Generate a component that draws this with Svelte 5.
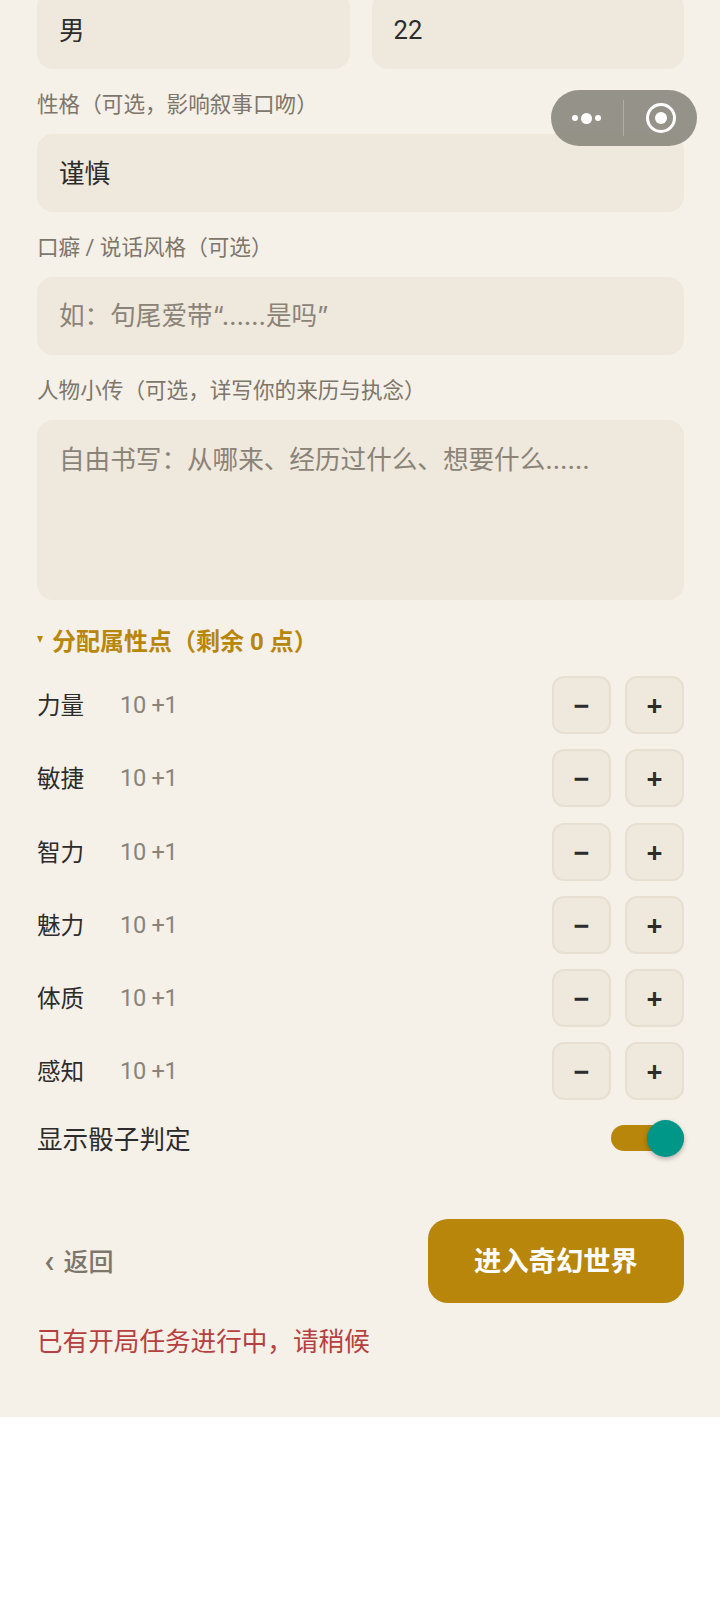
<script>
	const attrs = ['力量', '敏捷', '智力', '魅力', '体质', '感知'];
	let showDice = $state(true);
</script>

<div class="viewport">
	<div class="page">
		<div class="two-col">
			<input class="field" value="男" />
			<input class="field age" value="22" />
		</div>

		<label class="label" for="trait">性格（可选，影响叙事口吻）</label>
		<input id="trait" class="field" value="谨慎" />

		<label class="label" for="speech">口癖 / 说话风格（可选）</label>
		<input id="speech" class="field hint" placeholder="如：句尾爱带“……是吗”" />

		<label class="label" for="bio">人物小传（可选，详写你的来历与执念）</label>
		<textarea id="bio" class="field area" placeholder="自由书写：从哪来、经历过什么、想要什么……"></textarea>

		<div class="section-title"><span class="caret"></span>分配属性点（剩余 0 点）</div>

		<div class="attrs">
			{#each attrs as name}
				<div class="attr">
					<span class="attr-name">{name}</span>
					<span class="attr-value">10 +1</span>
					<div class="steppers">
						<button class="step">−</button>
						<button class="step">+</button>
					</div>
				</div>
			{/each}
		</div>

		<div class="dice-row">
			<span>显示骰子判定</span>
			<button class="switch" aria-label="显示骰子判定" onclick={() => (showDice = !showDice)}>
				<span class="track"></span>
				<span class="knob" class:off={!showDice}></span>
			</button>
		</div>

		<div class="actions">
			<button class="back"><span class="chev">‹</span>返回</button>
			<button class="enter">进入奇幻世界</button>
		</div>

		<p class="error">已有开局任务进行中，请稍候</p>
	</div>

	<!-- wechat capsule -->
	<div class="capsule">
		<div class="dots"><i></i><i class="big"></i><i></i></div>
		<span class="sep"></span>
		<div class="target"><i></i></div>
	</div>
</div>

<style>
	:global(body) {
		background: #fff;
	}

	.viewport {
		position: relative;
		width: 720px;
		height: 1600px;
		overflow: hidden;
		font-family: Roboto, 'Noto Sans CJK SC', sans-serif;
		color: #2c2c2c;
	}

	.page {
		height: 1417px;
		box-sizing: border-box;
		padding: 0 36px 0 37px;
		background: #f5f0e8;
		display: flex;
		flex-direction: column;
	}

	.two-col {
		display: flex;
		gap: 22px;
		margin-top: -9.5px;
	}

	.two-col .field {
		flex: 1;
		min-width: 0;
	}

	.field {
		display: block;
		width: 100%;
		height: 78px;
		box-sizing: border-box;
		padding: 0 22px 3px;
		border: none;
		border-radius: 16px;
		outline: none;
		background: #efe8dc;
		color: #2c2c2c;
		font-family: inherit;
		font-size: 25.6px;
	}

	.field.age {
		padding-bottom: 0;
	}

	.field.hint {
		padding-bottom: 0;
	}

	.field::placeholder {
		color: #8a8378;
		opacity: 1;
		font-family: Inter, 'Noto Sans CJK SC', sans-serif;
	}

	.area {
		height: 180px;
		padding: 21px 22px;
		line-height: 38px;
		resize: none;
	}

	.label {
		height: 65px;
		box-sizing: border-box;
		padding-top: 20px;
		font-size: 21.6px;
		line-height: 32px;
		color: #7d766b;
	}

	.two-col + .label {
		height: 65.5px;
	}

	.section-title {
		display: flex;
		align-items: center;
		margin-top: 25px;
		height: 32px;
		padding-bottom: 3px;
		box-sizing: border-box;
		font-size: 24px;
		font-weight: 700;
		color: #b8860b;
	}

	.caret {
		width: 0;
		height: 0;
		margin-right: 9px;
		border-left: 3.5px solid transparent;
		border-right: 3.5px solid transparent;
		border-top: 7px solid #b8860b;
	}

	.attrs {
		display: flex;
		flex-direction: column;
		gap: 15.3px;
		margin-top: 19px;
	}

	.attr {
		display: flex;
		align-items: center;
		height: 58px;
		font-size: 23.6px;
	}

	.attr-name {
		width: 83px;
		padding-bottom: 2px;
	}

	.attr-value {
		letter-spacing: -0.3px;
		color: #8a8378;
	}

	.steppers {
		display: flex;
		gap: 14px;
		margin-left: auto;
	}

	.step {
		width: 59px;
		height: 58px;
		padding: 0;
		border: 2px solid #e6dfd2;
		border-radius: 12px;
		background: #efe8dc;
		color: #2c2c2c;
		font-family: 'Noto Sans', sans-serif;
		font-size: 28px;
		font-weight: 700;
		line-height: 1;
	}

	.dice-row {
		display: flex;
		align-items: center;
		justify-content: space-between;
		margin-top: 8.5px;
		height: 58px;
		font-size: 25.6px;
	}

	.switch {
		position: relative;
		width: 74px;
		height: 38px;
		padding: 0;
		border: none;
		background: none;
	}

	.track {
		position: absolute;
		left: 1px;
		right: 0;
		top: 6px;
		height: 26px;
		border-radius: 13px;
		background: #b8860b;
	}

	.knob {
		position: absolute;
		right: 0;
		top: 1px;
		width: 37px;
		height: 37px;
		border-radius: 50%;
		background: #009688;
		box-shadow: 0 2px 5px rgba(0, 0, 0, 0.28);
	}

	.knob.off {
		right: auto;
		left: 0;
	}

	.actions {
		display: flex;
		align-items: center;
		justify-content: space-between;
		margin-top: 52px;
	}

	.back {
		display: flex;
		align-items: center;
		padding: 0 0 2px 7px;
		border: none;
		background: none;
		color: #7d766b;
		font-family: inherit;
		font-size: 25px;
		font-weight: 500;
	}

	.chev {
		margin-right: 9px;
		font-size: 34px;
		line-height: 1;
	}

	.enter {
		width: 256px;
		height: 84px;
		padding: 0 0 3px;
		border: none;
		border-radius: 20px;
		background: #b8860b;
		color: #fff;
		font-family: inherit;
		font-size: 27.3px;
		font-weight: 700;
	}

	.error {
		margin: 20px 0 0;
		font-size: 25.6px;
		line-height: 38px;
		color: #b5403f;
	}

	.capsule {
		position: absolute;
		top: 90px;
		left: 551px;
		width: 146px;
		height: 56px;
		display: flex;
		align-items: center;
		border-radius: 28px;
		background: rgba(125, 122, 112, 0.8);
	}

	.dots {
		display: flex;
		align-items: center;
		justify-content: center;
		gap: 3px;
		width: 70px;
	}

	.dots i {
		width: 6px;
		height: 6px;
		border-radius: 50%;
		background: #fff;
	}

	.dots i.big {
		width: 11px;
		height: 11px;
	}

	.sep {
		width: 1px;
		height: 36px;
		margin-left: 2px;
		background: rgba(255, 255, 255, 0.25);
	}

	.target {
		flex: 1;
		display: flex;
		align-items: center;
		justify-content: center;
	}

	.target i {
		width: 30px;
		height: 30px;
		box-sizing: border-box;
		border: 3px solid #fff;
		border-radius: 50%;
		display: flex;
		align-items: center;
		justify-content: center;
	}

	.target i::after {
		content: '';
		width: 12px;
		height: 12px;
		border-radius: 50%;
		background: #fff;
	}
</style>
